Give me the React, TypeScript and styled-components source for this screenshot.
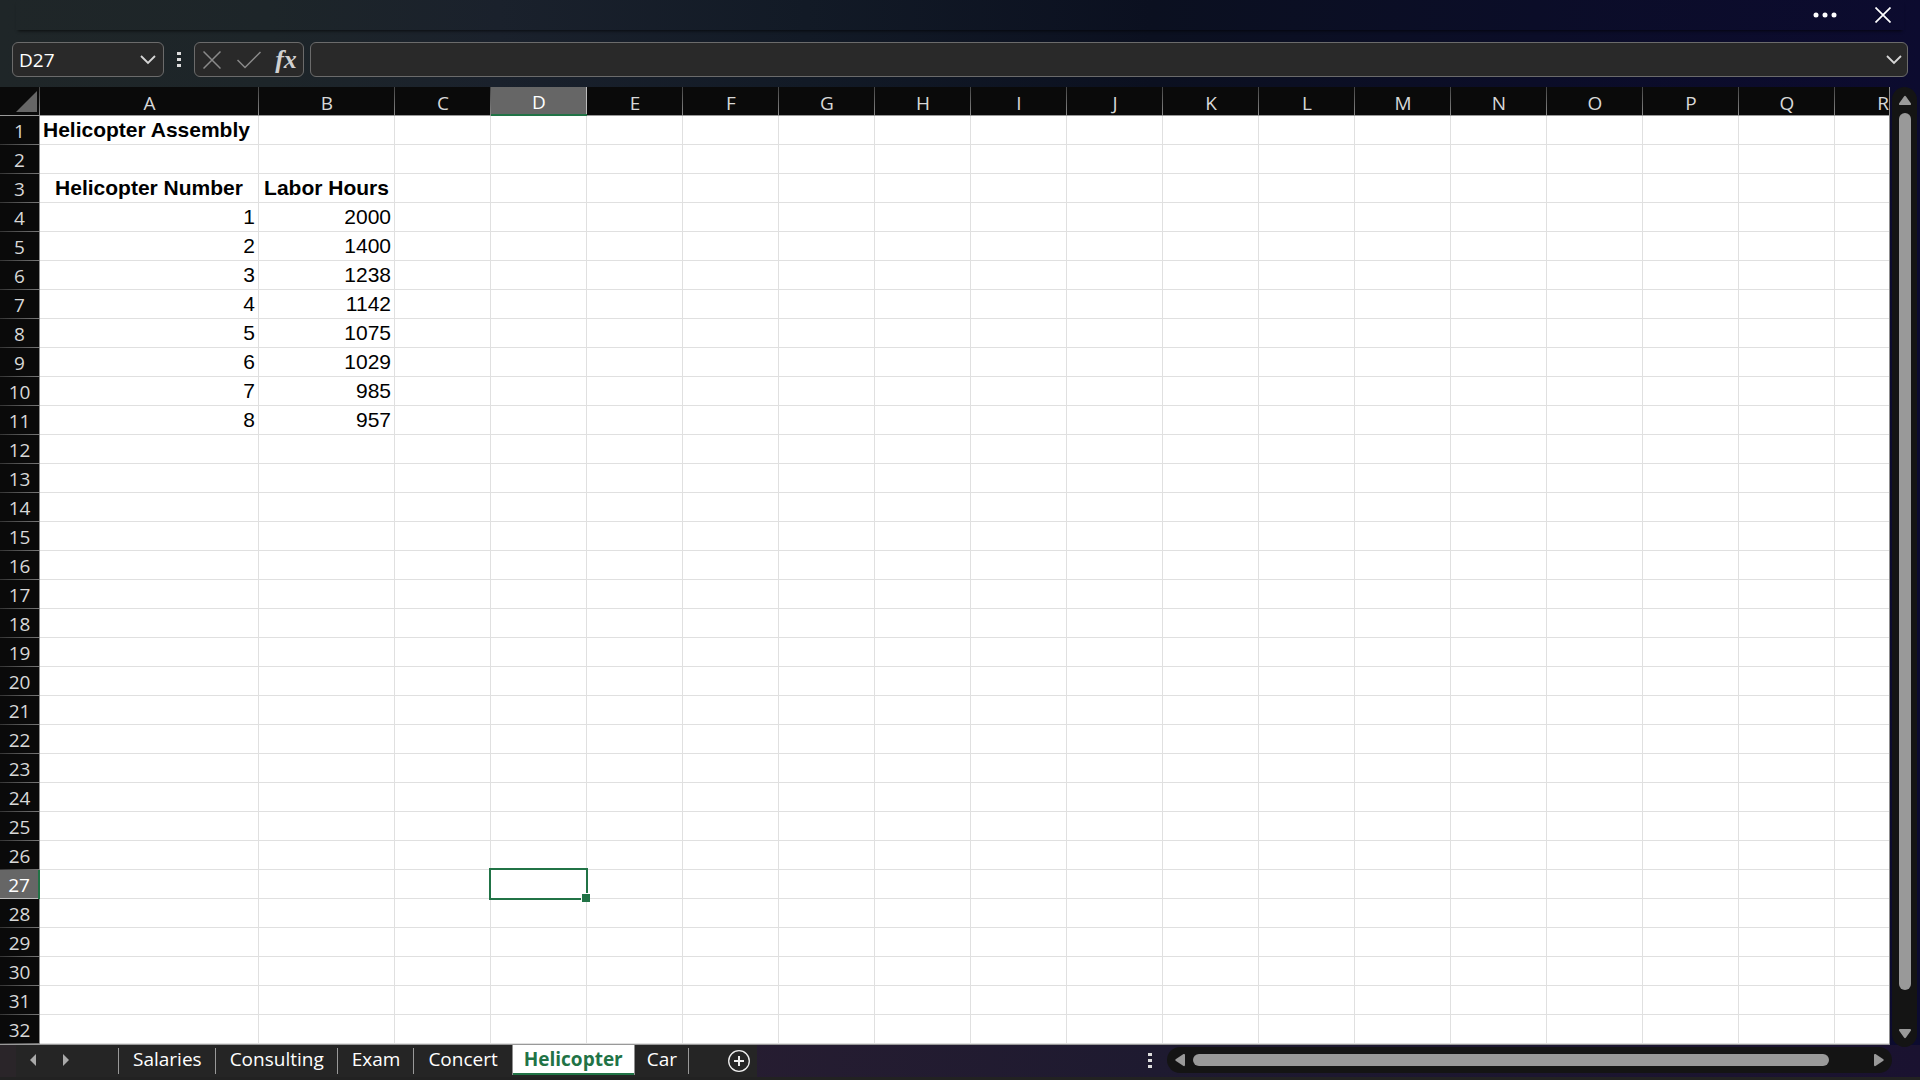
import React from "react";
import styled, { createGlobalStyle, css } from "styled-components";

const uiFont = `"Open Sans", "Noto Sans", sans-serif`;
const cellFont = `"Liberation Sans", Arial, sans-serif`;
const green = "#217346";

const GlobalStyle = createGlobalStyle`
  * { box-sizing: border-box; }
  body { margin: 0; background: #0d0c2c; }
  button, input { font: inherit; color: inherit; border: 0; background: none; padding: 0; margin: 0; }
`;

const Page = styled.div`
  display: flex;
  flex-direction: column;
  min-height: 100vh;
  overflow: hidden;
  font-family: ${uiFont};
  color: #fff;
  background: linear-gradient(90deg, #1f2628 0%, #1d2529 14%, #1a212c 26%, #121a26 42%, #0b1020 60%, #0b0d28 80%, #0c0b2f 100%);
`;

const TitleBar = styled.header`
  display: flex;
  justify-content: flex-end;
  align-items: center;
  gap: 28px;
  height: 30px;
  margin: 0 16px;
  padding-right: 6px;
  box-shadow: 0 3px 3px -2px rgba(0, 0, 0, 0.65);
`;

const IconButton = styled.button`
  display: flex;
  align-items: center;
  justify-content: center;
  width: 30px;
  height: 28px;
  flex: none;
`;

const FormulaBar = styled.div`
  display: flex;
  align-items: center;
  height: 57px;
  padding: 2px 12px 0;
`;

const Field = styled.div<{ $width?: number }>`
  display: flex;
  align-items: center;
  height: 35px;
  border: 1px solid #6b6b6b;
  border-radius: 6px;
  background: #292929;
  ${(p) => (p.$width ? css`width: ${p.$width}px; flex: none;` : css`flex: 1; min-width: 0;`)}
`;

const FieldInput = styled.input`
  flex: 1;
  min-width: 0;
  height: 100%;
  padding-left: 6px;
  font-size: 19px;
  outline: 0;
`;

const ExpandButton = styled(IconButton)`
  width: 26px;
`;

const BarGrip = styled.div`
  display: flex;
  justify-content: center;
  width: 30px;
  flex: none;
`;

const FormulaTools = styled(Field)`
  justify-content: space-between;
  padding: 0 2px;
  margin-right: 6px;
`;

const FunctionButton = styled(IconButton)`
  font-family: "Liberation Serif", "Times New Roman", serif;
  font-style: italic;
  font-weight: 700;
  font-size: 26px;
  line-height: 28px;
  color: #d0d0d0;
`;

const Workspace = styled.main`
  display: flex;
  gap: 2px;
  padding-right: 3px;
`;

const SheetView = styled.div`
  flex: 1;
  min-width: 0;
  overflow: hidden;
  border-right: 1px solid #8f8f8f;
  border-bottom: 1px solid #999;
  background: #fff;
`;

const Sheet = styled.table`
  table-layout: fixed;
  width: 1931px;
  border-collapse: separate;
  border-spacing: 0;
`;

const Col = styled.col<{ $width: number }>`
  width: ${(p) => p.$width}px;
`;

const ColumnHead = styled.th<{ $active?: boolean }>`
  height: 29px;
  padding: 4px 0 0;
  border-bottom: 1px solid #999;
  font-size: 19px;
  line-height: 24px;
  font-weight: 400;
  color: #d8d8d8;
  background: linear-gradient(#444, #888) right / 1px 100% no-repeat #0a0a0a;
  ${(p) =>
    p.$active &&
    css`
      padding-top: 3px;
      color: #fff;
      background: linear-gradient(#bbb, #bbb) right / 1px 100% no-repeat #666;
      border-bottom: 2px solid ${green};
    `}
`;

const Corner = styled(ColumnHead)`
  padding: 0 3px 3px 0;
  line-height: 0;
  text-align: right;
  vertical-align: bottom;
`;

const RowHead = styled.th<{ $active?: boolean }>`
  height: 29px;
  padding: 0;
  border-right: 1px solid #8f8f8f;
  font-size: 19px;
  line-height: 26px;
  font-weight: 400;
  color: #d8d8d8;
  background: linear-gradient(90deg, #333, #777) bottom / 100% 1px no-repeat #0a0a0a;
  ${(p) =>
    p.$active &&
    css`
      color: #fff;
      background: linear-gradient(#bbb, #bbb) bottom / 100% 1px no-repeat #666;
      border-right: 2px solid ${green};
    `}
`;

const Cell = styled.td<{ $align?: string; $bold?: boolean }>`
  position: relative;
  height: 29px;
  padding: 0 3px;
  border-right: 1px solid #e0e0e0;
  border-bottom: 1px solid #e0e0e0;
  font-family: ${cellFont};
  font-size: 21px;
  line-height: 28px;
  white-space: nowrap;
  color: #000;
  background: #fff;
  font-weight: ${(p) => (p.$bold ? 700 : 400)};
  text-align: ${(p) => p.$align ?? "left"};
`;

const Selection = styled.div`
  position: absolute;
  inset: -2px;
  z-index: 1;
  border: 2px solid ${green};

  &::after {
    content: "";
    position: absolute;
    right: -4px;
    bottom: -4px;
    width: 8px;
    height: 8px;
    background: ${green};
    border: 1px solid #fff;
    border-width: 1px 0 0 1px;
  }
`;

const VScroll = styled.div`
  display: flex;
  flex-direction: column;
  align-items: center;
  justify-content: space-between;
  width: 25px;
  flex: none;
  margin-bottom: -2px;
  padding: 8px 0;
  border-radius: 13px;
  background: #141414;
  z-index: 1;
`;

const VTrack = styled.div`
  flex: 1;
  padding: 8px 0 39px;
`;

const Thumb = styled.div`
  width: 100%;
  height: 100%;
  min-width: 12px;
  min-height: 12px;
  border-radius: 6px;
  background: #999;
`;

const ArrowButton = styled.button`
  display: flex;
  flex: none;
`;

const Footer = styled.footer`
  display: flex;
  align-items: flex-start;
  height: 35px;
  border-bottom: 3px solid #222;
  background: linear-gradient(90deg, #241c2b 0%, #271d31 35%, #1e1a30 60%, #1a1230 100%);
`;

const TabStrip = styled.nav`
  display: flex;
  height: 32px;
  background: #252525;
  flex: none;
`;

const TabArrows = styled.div`
  display: flex;
  align-items: center;
  gap: 27px;
  width: 119px;
  padding: 0 0 2px 30px;
  background: linear-gradient(90deg, #2a2529 16px, #252525 16px);
`;

const Tab = styled.button<{ $active?: boolean; $beforeActive?: boolean }>`
  height: 30px;
  padding: 0 14px 2px;
  font-size: 19px;
  line-height: 28px;
  background: linear-gradient(#999, #999) right 3px / 1px 26px no-repeat;
  ${(p) => p.$beforeActive && css`background: none;`}
  &:last-of-type {
    padding: 0 12px 2px;
  }
  ${(p) =>
    p.$active &&
    css`
      padding: 0 11px 2px;
      font-weight: 700;
      color: ${green};
      background: #fff;
      border: solid #8f8f8f;
      border-width: 0 1px;
      box-shadow: inset 0 -2px ${green};
    `}
`;

const Tabs = styled.div`
  display: flex;
`;

const LeadRule = styled.div`
  width: 1px;
  height: 26px;
  margin: 3px 0 0 -1px;
  background: #999;
`;

const AddButton = styled.button`
  display: flex;
  align-items: center;
  padding: 0 7px 0 39px;
`;

const ScrollGrip = styled.div`
  display: flex;
  align-items: center;
  height: 32px;
  margin-left: auto;
  padding-right: 15px;
`;

const HScroll = styled.div`
  display: flex;
  align-items: center;
  width: 38%;
  max-width: 725px;
  height: 26px;
  margin: 2px 28px 0 0;
  padding: 0 8px;
  border-radius: 13px;
  background: #141414;
`;

const HTrack = styled.div`
  flex: 1;
  height: 12px;
  padding: 0 45px 0 8px;
`;

const Dots = () => (
  <svg width="4" height="16" viewBox="0 0 4 16" fill="#ddd" aria-hidden>
    <rect y="0" width="4" height="3" />
    <rect y="6" width="4" height="3" />
    <rect y="12" width="4" height="3" />
  </svg>
);

const Chevron = () => (
  <svg width="16" height="10" viewBox="0 0 16 10" fill="none" stroke="#d6d6d6" strokeWidth="1.8" aria-hidden>
    <path d="M1 1l7 7 7-7" />
  </svg>
);

const arrowPaths = {
  up: "M6 1.5Q7 0 8 1.5L13 8.500Q13.500 10 12 10H2Q.5 10 1 8.500Z",
  down: "M6 8.500Q7 10 8 8.500L13 1.500Q13.500 0 12 0H2Q.5 0 1 1.500Z",
  left: "M1 6Q-.5 7 1 8L8.500 13Q10 13.500 10 12V2Q10 .5 8.500 1Z",
  right: "M9 6Q10.500 7 9 8L1.500 13Q0 13.500 0 12V2Q0 .5 1.500 1Z",
};

const Arrow = ({ dir }: { dir: keyof typeof arrowPaths }) => {
  const vertical = dir === "up" || dir === "down";
  const w = vertical ? 14 : 10;
  const h = vertical ? 10 : 14;
  return (
    <svg width={w} height={h} viewBox={`0 0 ${w} ${h}`} fill="#999" aria-hidden>
      <path d={arrowPaths[dir]} />
    </svg>
  );
};

const columns = "ABCDEFGHIJKLMNOPQR".split("").map((name, i) => ({
  name,
  width: i === 0 ? 219 : i === 1 ? 136 : 96,
}));

type Value = { text: string; align?: string; bold?: boolean };

const cells: Record<string, Value> = {
  A1: { text: "Helicopter Assembly", bold: true },
  A3: { text: "Helicopter Number", bold: true, align: "center" },
  B3: { text: "Labor Hours", bold: true, align: "center" },
};
[2000, 1400, 1238, 1142, 1075, 1029, 985, 957].forEach((hours, i) => {
  cells[`A${i + 4}`] = { text: String(i + 1), align: "right" };
  cells[`B${i + 4}`] = { text: String(hours), align: "right" };
});

const rows = Array.from({ length: 32 }, (_, i) => i + 1);
const tabs = ["Salaries", "Consulting", "Exam", "Concert", "Helicopter", "Car"];
const activeTab = "Helicopter";

export default function App() {
  return (
    <Page>
      <GlobalStyle />
      <TitleBar>
        <IconButton aria-label="More options">
          <svg width="24" height="6" viewBox="0 0 24 6" fill="#fff" aria-hidden>
            <circle cx="3" cy="3" r="2.500" />
            <circle cx="12" cy="3" r="2.500" />
            <circle cx="21" cy="3" r="2.500" />
          </svg>
        </IconButton>
        <IconButton aria-label="Close">
          <svg width="16" height="16" viewBox="0 0 16 16" stroke="#fff" strokeWidth="1.700" aria-hidden>
            <path d="M.5 .5l15 15M15.500 .5l-15 15" />
          </svg>
        </IconButton>
      </TitleBar>

      <FormulaBar>
        <Field $width={152}>
          <FieldInput aria-label="Name box" defaultValue="D27" />
          <IconButton aria-label="Show names">
            <Chevron />
          </IconButton>
        </Field>
        <BarGrip>
          <Dots />
        </BarGrip>
        <FormulaTools $width={110}>
          <IconButton aria-label="Cancel">
            <svg width="18" height="18" viewBox="0 0 18 18" stroke="#8a8a8a" strokeWidth="1.500" aria-hidden>
              <path d="M.5 .5l17 17M17.500 .5l-17 17" />
            </svg>
          </IconButton>
          <IconButton aria-label="Enter">
            <svg width="24" height="18" viewBox="0 0 24 18" fill="none" stroke="#8a8a8a" strokeWidth="1.500" aria-hidden>
              <path d="M.5 9l7.500 7.500L23.500 1" />
            </svg>
          </IconButton>
          <FunctionButton aria-label="Insert function">fx</FunctionButton>
        </FormulaTools>
        <Field>
          <FieldInput aria-label="Formula" defaultValue="" />
          <ExpandButton aria-label="Expand formula bar">
            <Chevron />
          </ExpandButton>
        </Field>
      </FormulaBar>

      <Workspace>
        <SheetView>
          <Sheet>
            <colgroup>
              <Col $width={40} />
              {columns.map((c) => (
                <Col key={c.name} $width={c.width} />
              ))}
            </colgroup>
            <thead>
              <tr>
                <Corner aria-label="Select all">
                  <svg width="21" height="21" viewBox="0 0 21 21" fill="#666" aria-hidden>
                    <path d="M21 0V21H0Z" />
                  </svg>
                </Corner>
                {columns.map((c) => (
                  <ColumnHead key={c.name} scope="col" $active={c.name === "D"}>
                    {c.name}
                  </ColumnHead>
                ))}
              </tr>
            </thead>
            <tbody>
              {rows.map((r) => (
                <tr key={r}>
                  <RowHead scope="row" $active={r === 27}>
                    {r}
                  </RowHead>
                  {columns.map((c) => {
                    const id = `${c.name}${r}`;
                    const value = cells[id];
                    return (
                      <Cell key={id} $align={value?.align} $bold={value?.bold}>
                        {value?.text}
                        {id === "D27" && <Selection />}
                      </Cell>
                    );
                  })}
                </tr>
              ))}
            </tbody>
          </Sheet>
        </SheetView>
        <VScroll>
          <ArrowButton aria-label="Scroll up">
            <Arrow dir="up" />
          </ArrowButton>
          <VTrack>
            <Thumb />
          </VTrack>
          <ArrowButton aria-label="Scroll down">
            <Arrow dir="down" />
          </ArrowButton>
        </VScroll>
      </Workspace>

      <Footer>
        <TabStrip aria-label="Sheets">
          <TabArrows>
            <ArrowButton aria-label="Previous sheet">
              <svg width="6" height="12" viewBox="0 0 6 12" fill="#aaa" aria-hidden>
                <path d="M6 0V12L0 6Z" />
              </svg>
            </ArrowButton>
            <ArrowButton aria-label="Next sheet">
              <svg width="6" height="12" viewBox="0 0 6 12" fill="#aaa" aria-hidden>
                <path d="M0 0V12L6 6Z" />
              </svg>
            </ArrowButton>
          </TabArrows>
          <LeadRule />
          <Tabs>
            {tabs.map((t, i) => (
              <Tab key={t} $active={t === activeTab} $beforeActive={tabs[i + 1] === activeTab}>
                {t}
              </Tab>
            ))}
          </Tabs>
          <AddButton aria-label="New sheet">
            <svg width="22" height="22" viewBox="0 0 22 22" fill="none" stroke="#eee" aria-hidden>
              <circle cx="11" cy="11" r="10.300" strokeWidth="1.300" />
              <path strokeWidth="2" d="M11 6V16M6 11H16" />
            </svg>
          </AddButton>
        </TabStrip>
        <ScrollGrip>
          <Dots />
        </ScrollGrip>
        <HScroll>
          <ArrowButton aria-label="Scroll left">
            <Arrow dir="left" />
          </ArrowButton>
          <HTrack>
            <Thumb />
          </HTrack>
          <ArrowButton aria-label="Scroll right">
            <Arrow dir="right" />
          </ArrowButton>
        </HScroll>
      </Footer>
    </Page>
  );
}
